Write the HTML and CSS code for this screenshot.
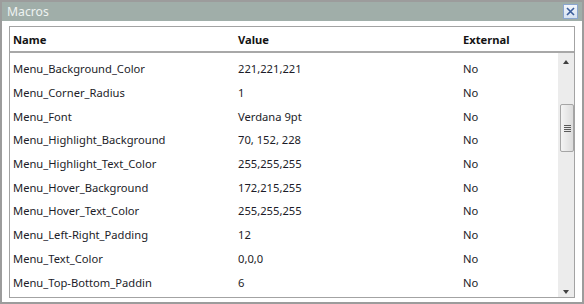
FILE: index.html
```html
<!DOCTYPE html>
<html>
<head>
<meta charset="utf-8">
<link rel="stylesheet" href="styles.css">
</head>
<body>
<div class="window">
  <div class="titlebar">
    <span class="title">Macros</span>
    <span class="close"><svg width="11" height="11" viewBox="0 0 11 11"><path d="M2 2 L9 9 M9 2 L2 9" stroke="#3b5e9c" stroke-width="1.6" fill="none"/></svg></span>
  </div>
  <div class="body">
    <div class="list">
      <div class="header">
        <span class="col">Name</span><span class="col">Value</span><span class="col">External</span>
      </div>
      <div class="content">
        <div class="rows">
          <div class="row"><span class="col">Menu_Background_Color</span><span class="col">221,221,221</span><span class="col">No</span></div>
          <div class="row"><span class="col">Menu_Corner_Radius</span><span class="col">1</span><span class="col">No</span></div>
          <div class="row"><span class="col">Menu_Font</span><span class="col">Verdana 9pt</span><span class="col">No</span></div>
          <div class="row"><span class="col">Menu_Highlight_Background</span><span class="col">70, 152, 228</span><span class="col">No</span></div>
          <div class="row"><span class="col">Menu_Highlight_Text_Color</span><span class="col">255,255,255</span><span class="col">No</span></div>
          <div class="row"><span class="col">Menu_Hover_Background</span><span class="col">172,215,255</span><span class="col">No</span></div>
          <div class="row"><span class="col">Menu_Hover_Text_Color</span><span class="col">255,255,255</span><span class="col">No</span></div>
          <div class="row"><span class="col">Menu_Left-Right_Padding</span><span class="col">12</span><span class="col">No</span></div>
          <div class="row"><span class="col">Menu_Text_Color</span><span class="col">0,0,0</span><span class="col">No</span></div>
          <div class="row"><span class="col">Menu_Top-Bottom_Paddin</span><span class="col">6</span><span class="col">No</span></div>
        </div>
        <div class="scrollbar">
          <div class="arrow up"></div>
          <div class="track">
            <div class="thumb"><div class="grip"></div></div>
          </div>
          <div class="arrow down"></div>
        </div>
      </div>
    </div>
  </div>
</div>
</body>
</html>
```

FILE: styles.css
```css
* { box-sizing: border-box; }
html, body { margin: 0; padding: 0; background: #ffffff; }
body {
  font-family: "Noto Sans", "DejaVu Sans", sans-serif;
  font-size: 11.2px;
  color: #1c1c28;
}
.window {
  width: 584px;
  height: 304px;
  border: 2px solid #9c9c9c;
  display: flex;
  flex-direction: column;
  background: #ffffff;
}
.titlebar {
  height: 19px;
  background: #a0aea9;
  display: flex;
  align-items: center;
  justify-content: space-between;
  padding: 0 4px 0 5px;
}
.title {
  color: #eef3f1;
  font-size: 12.2px;
  line-height: 19px;
}
.close {
  width: 15px;
  height: 15px;
  border: 1px solid #8aa6cf;
  background: linear-gradient(#f2f6fb, #d6e2f2);
  display: flex;
  align-items: center;
  justify-content: center;
}
.body {
  flex: 1;
  padding: 5px 7px 4px 7px;
  display: flex;
  min-height: 0;
}
.list {
  flex: 1;
  min-width: 0;
  border: 1px solid #a3a3a3;
  display: flex;
  flex-direction: column;
}
.header {
  height: 26px;
  border-bottom: 2px solid #a8a8a8;
  display: flex;
  align-items: center;
  font-weight: bold;
  color: #141414;
  padding-left: 3px;
}
.col { width: 225px; flex: none; white-space: nowrap; }
.col:last-child { width: auto; flex: 1; }
.content {
  flex: 1;
  min-height: 0;
  display: flex;
}
.rows {
  flex: 1;
  min-width: 0;
  overflow: hidden;
  padding: 4px 0 0 3px;
}
.row {
  height: 23.7px;
  display: flex;
  align-items: center;
}
.scrollbar {
  width: 16px;
  flex: none;
  background: #ececec;
  display: flex;
  flex-direction: column;
  align-items: center;
}
.arrow {
  width: 0; height: 0;
  border-left: 3px solid transparent;
  border-right: 3px solid transparent;
}
.arrow.up { border-bottom: 4px solid #404040; margin-top: 7px; }
.arrow.down { border-top: 4px solid #404040; margin-bottom: 3px; }
.track {
  flex: 1;
  width: 100%;
  padding-top: 40px;
  padding-left: 2px;
}
.thumb {
  width: 14px;
  height: 48px;
  border: 1px solid #a5a5a5;
  border-radius: 2px;
  background: linear-gradient(90deg, #f4f4f4, #dcdcdc);
  display: flex;
  align-items: center;
  justify-content: center;
}
.grip {
  width: 7px;
  height: 7px;
  background: repeating-linear-gradient(#5a5a5a 0 1px, transparent 1px 2px);
}
```
